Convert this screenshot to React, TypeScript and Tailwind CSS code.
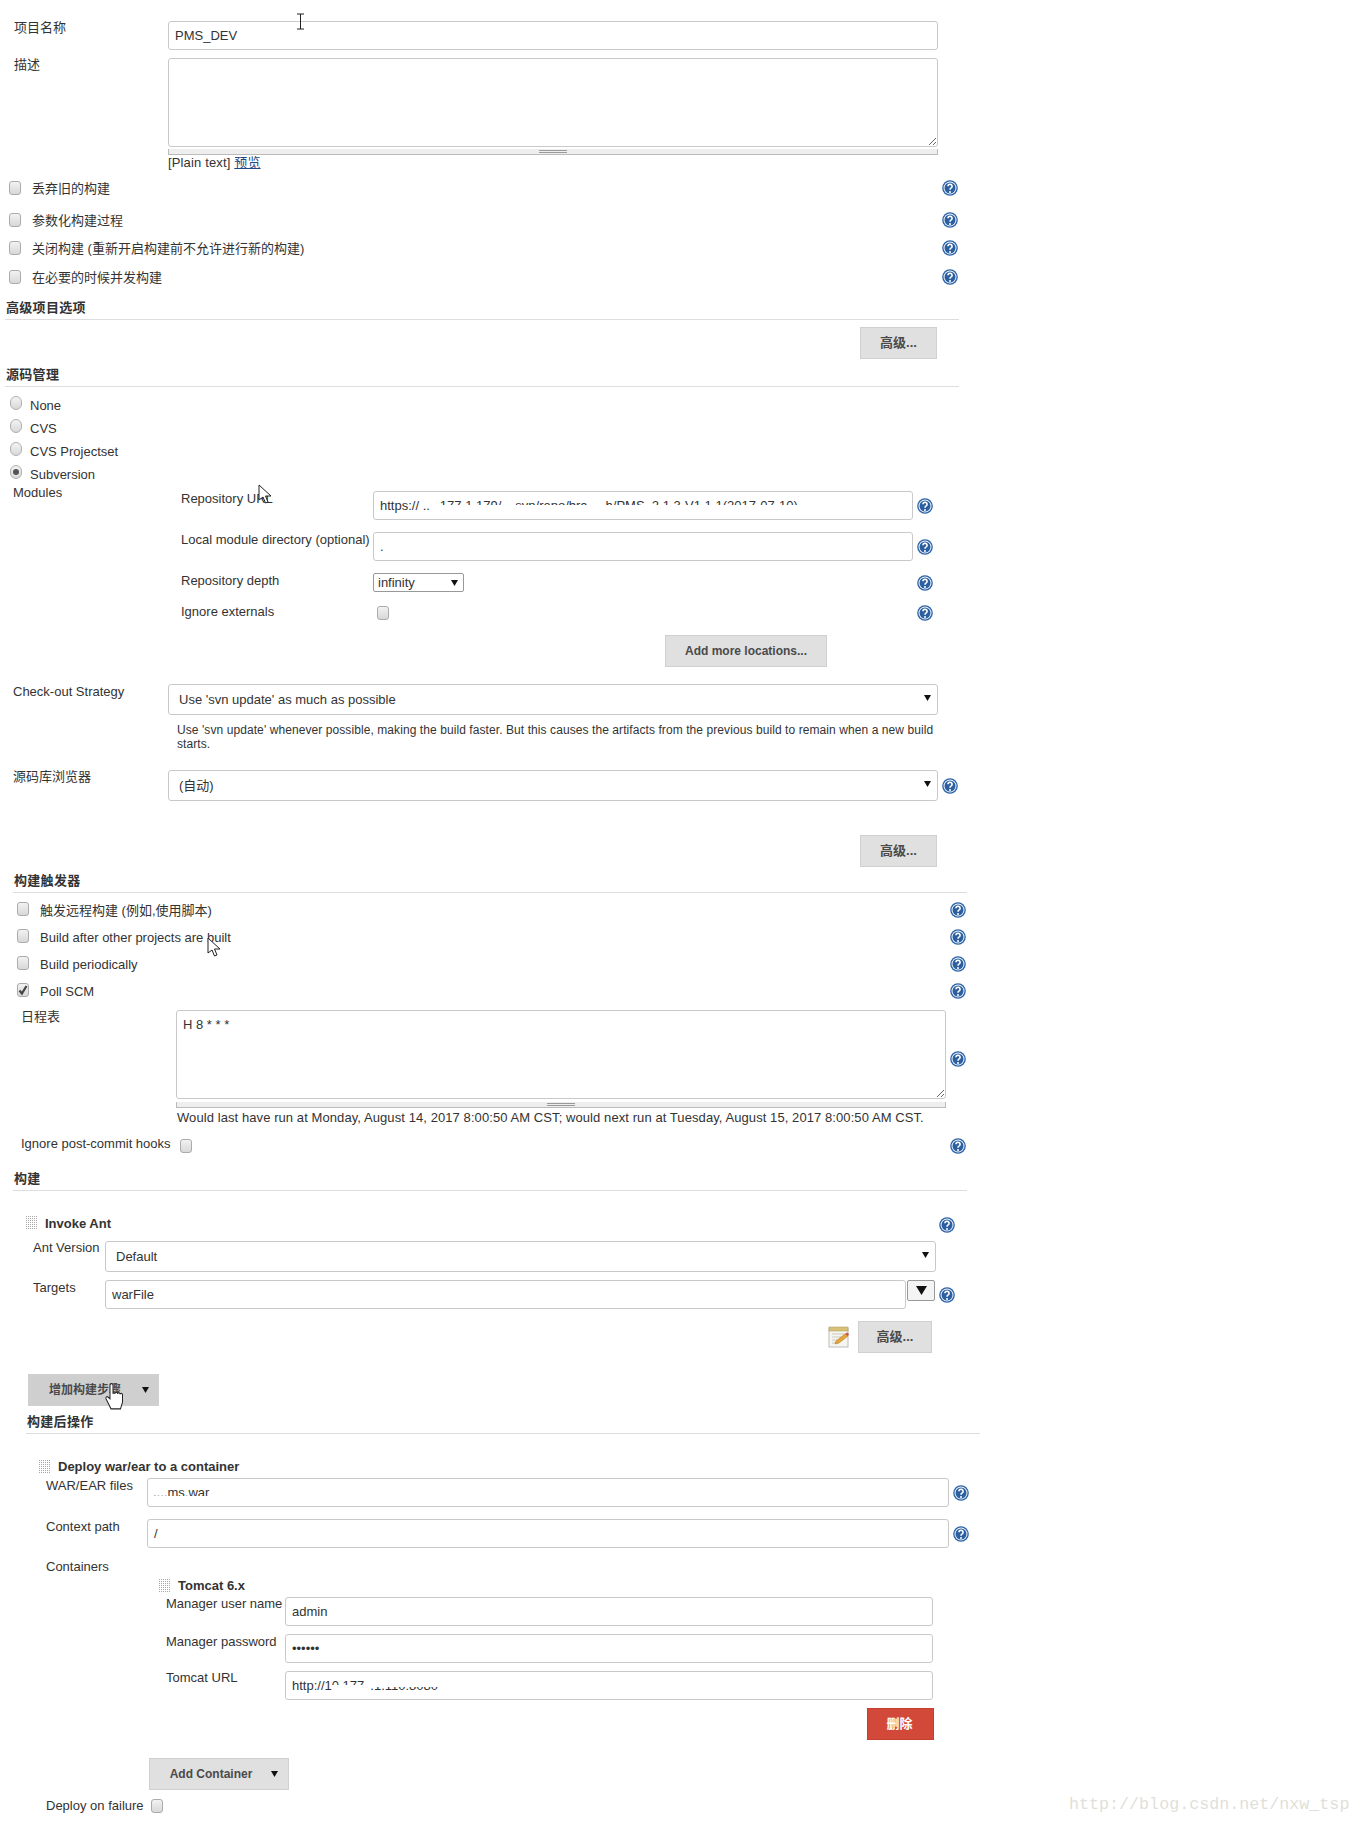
import type { ReactNode } from 'react'

const boxClass = 'border border-[#c9c9c9] rounded-[3px] bg-white text-[13px] text-[#333] outline-none'

function Help({ className = '' }: { className?: string }) {
  return (
    <svg width="16" height="16" viewBox="0 0 16 16" className={`shrink-0 ${className}`}>
      <circle cx="8" cy="8" r="7.8" fill="#2a63a8" />
      <circle cx="8" cy="8" r="6.5" fill="#f2f6fb" />
      <circle cx="8" cy="8" r="5.5" fill="#2c5f9f" />
      <path d="M5.900 6.200a2.100 2 0 1 1 3.300 1.700c-.8.500-1.200.9-1.200 1.800" fill="none" stroke="#fff" strokeWidth="1.600" />
      <circle cx="8" cy="11.900" r="1" fill="#fff" />
    </svg>
  )
}

function Check({ checked = false, className = '' }: { checked?: boolean; className?: string }) {
  return (
    <span className={`relative block w-3 h-[14px] shrink-0 rounded-[3px] border border-[#ababab] bg-linear-to-b from-[#f2f2f2] to-[#d8d8d8] ${className}`}>
      {checked && (
        <svg viewBox="0 0 12 14" className="absolute -left-px -top-px w-3 h-[14px]">
          <path d="M2.500 7.500l2.400 3L9.500 3" fill="none" stroke="#444" strokeWidth="2.200" />
        </svg>
      )}
    </span>
  )
}

function Radio({ checked = false }: { checked?: boolean }) {
  return (
    <span className="flex items-center justify-center w-3 h-[14px] shrink-0 rounded-full border border-[#b0b0b0] bg-linear-to-b from-[#f4f4f4] to-[#d8d8d8]">
      {checked && <span className="block w-[6px] h-[6px] rounded-full bg-[#555]" />}
    </span>
  )
}

function Caret({ className = '' }: { className?: string }) {
  return (
    <svg width="7" height="6" viewBox="0 0 7 6" className={`shrink-0 ${className}`}>
      <path d="M0 0h7L3.500 6z" fill="#111" />
    </svg>
  )
}

function Grip() {
  const dots = []
  for (let y = 0; y < 7; y++) {
    for (let x = 0; x < 6; x++) {
      dots.push(<rect key={`${x}-${y}`} x={x * 2} y={y * 2} width="1" height="1" fill="#a6a6a6" />)
    }
  }
  return (
    <svg width="12" height="14" viewBox="0 0 12 14" className="shrink-0">
      {dots}
    </svg>
  )
}

function Button({ children, className = '' }: { children: ReactNode; className?: string }) {
  return (
    <button className={`flex items-center justify-center h-8 shrink-0 border border-[#d0d0d0] bg-[#e0e0e0] text-[12px] font-bold text-[#4a4a4a] ${className}`}>
      {children}
    </button>
  )
}

function Select({ children, className = '' }: { children: ReactNode; className?: string }) {
  return (
    <div className={`flex items-center justify-between h-[31px] pl-[10px] pr-[6px] shrink-0 ${boxClass} ${className}`}>
      <span>{children}</span>
      <Caret className="-mt-1" />
    </div>
  )
}

function TextBox({ value, className = '', type = 'text' }: { value: string; className?: string; type?: string }) {
  return <input readOnly type={type} value={value} className={`h-[29px] px-[6px] shrink-0 ${boxClass} ${className}`} />
}

// 截图里被涂掉的文字：用白条盖住一部分
function Masked({ children, keep = 'top', className = '' }: { children: string; keep?: 'top' | 'bottom' | 'mid'; className?: string }) {
  return (
    <span className={`relative inline-block leading-[15px] ${className}`}>
      {children}
      {keep === 'top' && <span className="absolute inset-x-0 bottom-0 h-[8px] bg-white" />}
      {keep === 'bottom' && <span className="absolute inset-x-0 top-0 h-[9px] bg-white" />}
      {keep === 'mid' && (
        <>
          <span className="absolute inset-x-0 top-0 h-[5px] bg-white" />
          <span className="absolute inset-x-0 bottom-0 h-[4px] bg-white" />
        </>
      )}
    </span>
  )
}

function Grippy({ className = '' }: { className?: string }) {
  return (
    <div className={`flex items-center justify-center h-[6px] bg-[#eee] border-b border-x border-[#bbb] ${className}`}>
      <span className="block w-7 h-[3px] border-y border-[#999]" />
    </div>
  )
}

function SectionTitle({ children, className = '' }: { children: string; className?: string }) {
  return (
    <div className={`pl-px border-b border-[#ddd] text-[13px] tracking-[0.3px] font-bold text-[#333] ${className}`}>
      {children}
    </div>
  )
}

function CheckRow({ label, checked, low, className = '' }: { label: string; checked?: boolean; low?: boolean; className?: string }) {
  return (
    <div className={`flex items-center h-4 w-[949px] ${className}`}>
      <Check checked={checked} />
      <span className={`ml-[11px] flex-1 text-[13px] text-[#333] ${low ? 'mt-1' : 'mt-[2px]'}`}>{label}</span>
      <Help className={low ? 'mt-[2px]' : ''} />
    </div>
  )
}

function RadioRow({ label, className = '', checked }: { label: string; className?: string; checked?: boolean }) {
  return (
    <div className={`flex items-center ml-[10px] h-4 ${className}`}>
      <Radio checked={checked} />
      <span className="ml-2 mt-[6px] text-[13px] text-[#333]">{label}</span>
    </div>
  )
}

function Label({ children, className = '' }: { children: string; className?: string }) {
  return <div className={`shrink-0 text-[13px] leading-[14px] text-[#333] whitespace-nowrap ${className}`}>{children}</div>
}

export default function App() {
  return (
    <div className="relative w-[1360px] h-[1824px] overflow-hidden bg-white flex flex-col [font-family:'Liberation_Sans','Noto_Sans_CJK_SC',sans-serif]">
      {/* 基本信息 */}
      <div className="flex ml-[14px] mt-[21px] h-[29px]">
        <Label className="w-[154px]">项目名称</Label>
        <TextBox value="PMS_DEV" className="w-[770px]" />
      </div>
      <div className="flex ml-[14px] mt-2 h-[89px]">
        <Label className="w-[154px]">描述</Label>
        <textarea readOnly className={`w-[770px] h-[89px] resize-y ${boxClass}`} />
      </div>
      <Grippy className="ml-[168px] mt-[2px] w-[770px]" />
      <div className="ml-[168px] mt-px h-[14px] text-[13px] leading-[14px] tracking-[0.15px] text-[#333]">
        [Plain text] <a className="text-[#204a87] underline">预览</a>
      </div>

      <CheckRow className="ml-[9px] mt-[10px]" label="丢弃旧的构建" />
      <CheckRow className="ml-[9px] mt-4" label="参数化构建过程" />
      <CheckRow className="ml-[9px] mt-3" label="关闭构建 (重新开启构建前不允许进行新的构建)" />
      <CheckRow className="ml-[9px] mt-[13px]" label="在必要的时候并发构建" />

      <SectionTitle className="ml-[5px] w-[954px] mt-[15px] h-5 leading-4">高级项目选项</SectionTitle>
      <div className="flex justify-end w-[937px] mt-[7px]">
        <Button className="w-[77px] text-[13px]">高级...</Button>
      </div>

      {/* 源码管理 */}
      <SectionTitle className="ml-[5px] w-[954px] mt-2 h-5 leading-4">源码管理</SectionTitle>
      <RadioRow className="mt-2" label="None" />
      <RadioRow className="mt-[7px]" label="CVS" />
      <RadioRow className="mt-[7px]" label="CVS Projectset" />
      <RadioRow className="mt-[7px]" label="Subversion" checked />

      <div className="flex ml-[13px] mt-[6px]">
        <Label className="w-[168px]">Modules</Label>
        <div className="flex flex-col pt-[5px]">
          <div className="flex h-[29px]">
            <Label className="w-[192px] pt-px">Repository URL</Label>
            <div className={`flex items-center w-[540px] h-[29px] px-[6px] shrink-0 whitespace-pre ${boxClass}`}>
              <span>https:// ..</span>
              <Masked className="ml-[10px]">177.1.179/</Masked>
              <Masked className="ml-[14px]">svn/repo/bra</Masked>
              <Masked className="ml-[18px]">h/PMS_2.1.3-V1.1.1(2017-07-10)</Masked>
            </div>
            <Help className="ml-1 mt-[7px]" />
          </div>
          <div className="flex h-[29px] mt-3">
            <Label className="w-[192px] pt-px">Local module directory (optional)</Label>
            <TextBox value="." className="w-[540px]" />
            <Help className="ml-1 mt-[7px]" />
          </div>
          <div className="flex h-[19px] mt-3">
            <Label className="w-[192px] pt-px">Repository depth</Label>
            <div className="flex items-center justify-between w-[91px] h-[19px] pl-[4px] pr-[5px] shrink-0 border border-[#999] rounded-[2px] text-[13px] text-[#333]">
              <span>infinity</span>
              <Caret />
            </div>
            <Help className="ml-[453px] mt-[2px]" />
          </div>
          <div className="flex items-center h-4 mt-[13px]">
            <Label className="w-[196px] -mt-[3px]">Ignore externals</Label>
            <Check />
            <Help className="ml-[528px]" />
          </div>
          <Button className="ml-[484px] w-[162px] mt-[14px]">Add more locations...</Button>
        </div>
      </div>

      <div className="flex ml-[13px] mt-[17px]">
        <Label className="w-[155px] pt-px">Check-out Strategy</Label>
        <Select className="w-[770px]">Use 'svn update' as much as possible</Select>
      </div>
      <p className="ml-[177px] mt-2 w-[761px] h-7 text-[12px] leading-[14px] tracking-[0.08px] text-[#333]">
        Use 'svn update' whenever possible, making the build faster. But this causes the artifacts from the previous build to remain when a new build starts.
      </p>
      <div className="flex ml-[13px] mt-[19px]">
        <Label className="w-[155px]">源码库浏览器</Label>
        <Select className="w-[770px]">(自动)</Select>
        <Help className="ml-1 mt-2" />
      </div>
      <div className="flex justify-end w-[937px] mt-[34px]">
        <Button className="w-[77px] text-[13px]">高级...</Button>
      </div>

      {/* 构建触发器 */}
      <SectionTitle className="ml-[13px] w-[954px] mt-[7px] h-[19px] leading-[14px]">构建触发器</SectionTitle>
      <CheckRow low className="ml-[17px] mt-2" label="触发远程构建 (例如,使用脚本)" />
      <CheckRow low className="ml-[17px] mt-[11px]" label="Build after other projects are built" />
      <CheckRow low className="ml-[17px] mt-[11px]" label="Build periodically" />
      <CheckRow low className="ml-[17px] mt-[11px]" label="Poll SCM" checked />

      <div className="flex ml-[21px] mt-3">
        <Label className="w-[155px]">日程表</Label>
        <textarea readOnly value="H 8 * * *" className={`w-[770px] h-[89px] px-[6px] py-[4px] resize-y ${boxClass}`} />
        <Help className="ml-1 mt-[41px]" />
      </div>
      <Grippy className="ml-[176px] mt-[3px] w-[770px]" />
      <div className="ml-[177px] mt-[3px] h-[14px] text-[13px] leading-[14px] tracking-[0.08px] text-[#333] whitespace-nowrap">
        Would last have run at Monday, August 14, 2017 8:00:50 AM CST; would next run at Tuesday, August 15, 2017 8:00:50 AM CST.
      </div>
      <div className="flex items-center ml-[21px] mt-[13px] w-[945px] h-4">
        <Label className="w-[159px] -mt-[5px]">Ignore post-commit hooks</Label>
        <Check />
        <Help className="ml-auto" />
      </div>

      {/* 构建 */}
      <SectionTitle className="ml-[13px] w-[954px] mt-[17px] h-5 leading-4">构建</SectionTitle>
      <div className="flex items-center ml-[26px] mt-6 w-[929px] h-4">
        <Grip />
        <span className="ml-[7px] mt-px flex-1 text-[13px] font-bold text-[#333]">Invoke Ant</span>
        <Help className="mt-1" />
      </div>
      <div className="flex ml-[33px] mt-[10px]">
        <Label className="w-[72px]">Ant Version</Label>
        <Select className="w-[831px]">Default</Select>
      </div>
      <div className="flex ml-[33px] mt-2">
        <Label className="w-[72px] pt-px">Targets</Label>
        <TextBox value="warFile" className="w-[801px]" />
        <div className="flex items-center justify-center w-[28px] h-[21px] ml-px shrink-0 border border-[#999] rounded-[2px] bg-[#f4f4f4]">
          <svg width="11" height="9" viewBox="0 0 11 9">
            <path d="M0 0h11L5.500 9z" fill="#111" />
          </svg>
        </div>
        <Help className="ml-1 mt-[7px]" />
      </div>
      <div className="flex items-center justify-end gap-2 w-[932px] mt-3">
        <svg width="22" height="22" viewBox="0 0 22 22" className="shrink-0">
          <rect x="1" y="2" width="19" height="19" fill="#f6f6f0" stroke="#bbb" />
          <rect x="1" y="1" width="19" height="4" fill="#d8c27a" stroke="#a8965a" strokeWidth="0.500" />
          <path d="M4 8h13M4 11h13M4 14h8M4 17h6" stroke="#c9c9c0" />
          <path d="M7 18l1-3 9-7 3 2-9 7z" fill="#e8a53a" stroke="#a86d20" strokeWidth="0.500" />
          <path d="M17 8l3 2 1-2-2-1.500z" fill="#d0504a" />
        </svg>
        <Button className="w-[74px] text-[13px]">高级...</Button>
      </div>
      <Button className="relative ml-[28px] mt-[21px] w-[131px] !bg-[#cfcfcf] text-[12.400px]">
        <span className="ml-[-17px]">增加构建步骤</span>
        <Caret className="absolute right-[9px] top-[12px]" />
      </Button>

      {/* 构建后操作 */}
      <SectionTitle className="ml-[26px] w-[954px] mt-2 h-5 leading-4">构建后操作</SectionTitle>
      <div className="flex items-center ml-[39px] mt-[25px] h-4">
        <Grip />
        <span className="ml-[7px] text-[13px] font-bold text-[#333]">Deploy war/ear to a container</span>
      </div>
      <div className="flex ml-[46px] mt-[3px]">
        <Label className="w-[101px] pt-px">WAR/EAR files</Label>
        <div className={`flex items-center w-[802px] h-[29px] px-[5px] shrink-0 ${boxClass}`}>
          <Masked keep="mid">,...ms.war</Masked>
        </div>
        <Help className="ml-1 mt-[7px]" />
      </div>
      <div className="flex ml-[46px] mt-3">
        <Label className="w-[101px] pt-px">Context path</Label>
        <TextBox value="/" className="w-[802px]" />
        <Help className="ml-1 mt-[7px]" />
      </div>
      <Label className="ml-[46px] mt-3 h-[14px]">Containers</Label>
      <div className="flex items-center ml-[159px] mt-1 h-4">
        <Grip />
        <span className="ml-[7px] text-[13px] font-bold text-[#333]">Tomcat 6.x</span>
      </div>
      <div className="flex ml-[166px] mt-[3px]">
        <Label className="w-[119px]">Manager user name</Label>
        <TextBox value="admin" className="w-[648px]" />
      </div>
      <div className="flex ml-[166px] mt-2">
        <Label className="w-[119px] pt-px">Manager password</Label>
        <TextBox type="password" value="secret" className="w-[648px]" />
      </div>
      <div className="flex ml-[166px] mt-2">
        <Label className="w-[119px]">Tomcat URL</Label>
        <div className={`flex items-center w-[648px] h-[29px] px-[6px] shrink-0 whitespace-pre ${boxClass}`}>
          <span>http://1</span>
          <Masked>0.177</Masked>
          <Masked keep="bottom" className="ml-[6px]">.1.110:8080</Masked>
        </div>
      </div>
      <Button className="ml-[867px] mt-2 w-[67px] !border-[#c23f30] !bg-[#d24939] !text-white text-[13px]">
        <span className="ml-[-2px]">删除</span>
      </Button>
      <Button className="relative ml-[149px] mt-[18px] w-[140px]">
        <span className="ml-[-16px]">Add Container</span>
        <Caret className="absolute right-[10px] top-[12px]" />
      </Button>
      <div className="flex items-center ml-[46px] mt-2 h-4">
        <Label className="w-[105px] -mt-px">Deploy on failure</Label>
        <Check />
      </div>

      {/* 水印 */}
      <div className="absolute left-[1069px] top-[1795px] text-[16.700px] leading-5 text-[#dfdfda] [font-family:'Liberation_Mono',monospace]">
        http://blog.csdn.net/nxw_tsp
      </div>

      {/* 截图里的鼠标指针 */}
      <svg width="9" height="17" viewBox="0 0 9 17" className="absolute left-[296px] top-[13px]">
        <path d="M1 1h7M4.500 1v15M1 16h7" fill="none" stroke="#222" />
      </svg>
      <svg width="14" height="20" viewBox="0 0 14 20" className="absolute left-[258px] top-[484px]">
        <path d="M1 1v15l4-3 2.500 6 2.500-1-2.500-6H13z" fill="#fff" stroke="#222" />
      </svg>
      <svg width="14" height="20" viewBox="0 0 14 20" className="absolute left-[207px] top-[937px]">
        <path d="M1 1v15l4-3 2.500 6 2.500-1-2.500-6H13z" fill="#fff" stroke="#222" />
      </svg>
      <svg width="20" height="27" viewBox="0 0 20 24" preserveAspectRatio="none" className="absolute left-[104px] top-[1383px]">
        <path d="M6 2a1.500 1.500 0 0 1 3 0v7l2 0a1.300 1.300 0 0 1 2.500.500 1.300 1.300 0 0 1 2.500.500 1.300 1.300 0 0 1 2.500 1V17l-2 6H7l-5-9c-.6-1.500 1-2.500 2-1.500L6 14z" fill="#fff" stroke="#222" />
      </svg>
    </div>
  )
}
